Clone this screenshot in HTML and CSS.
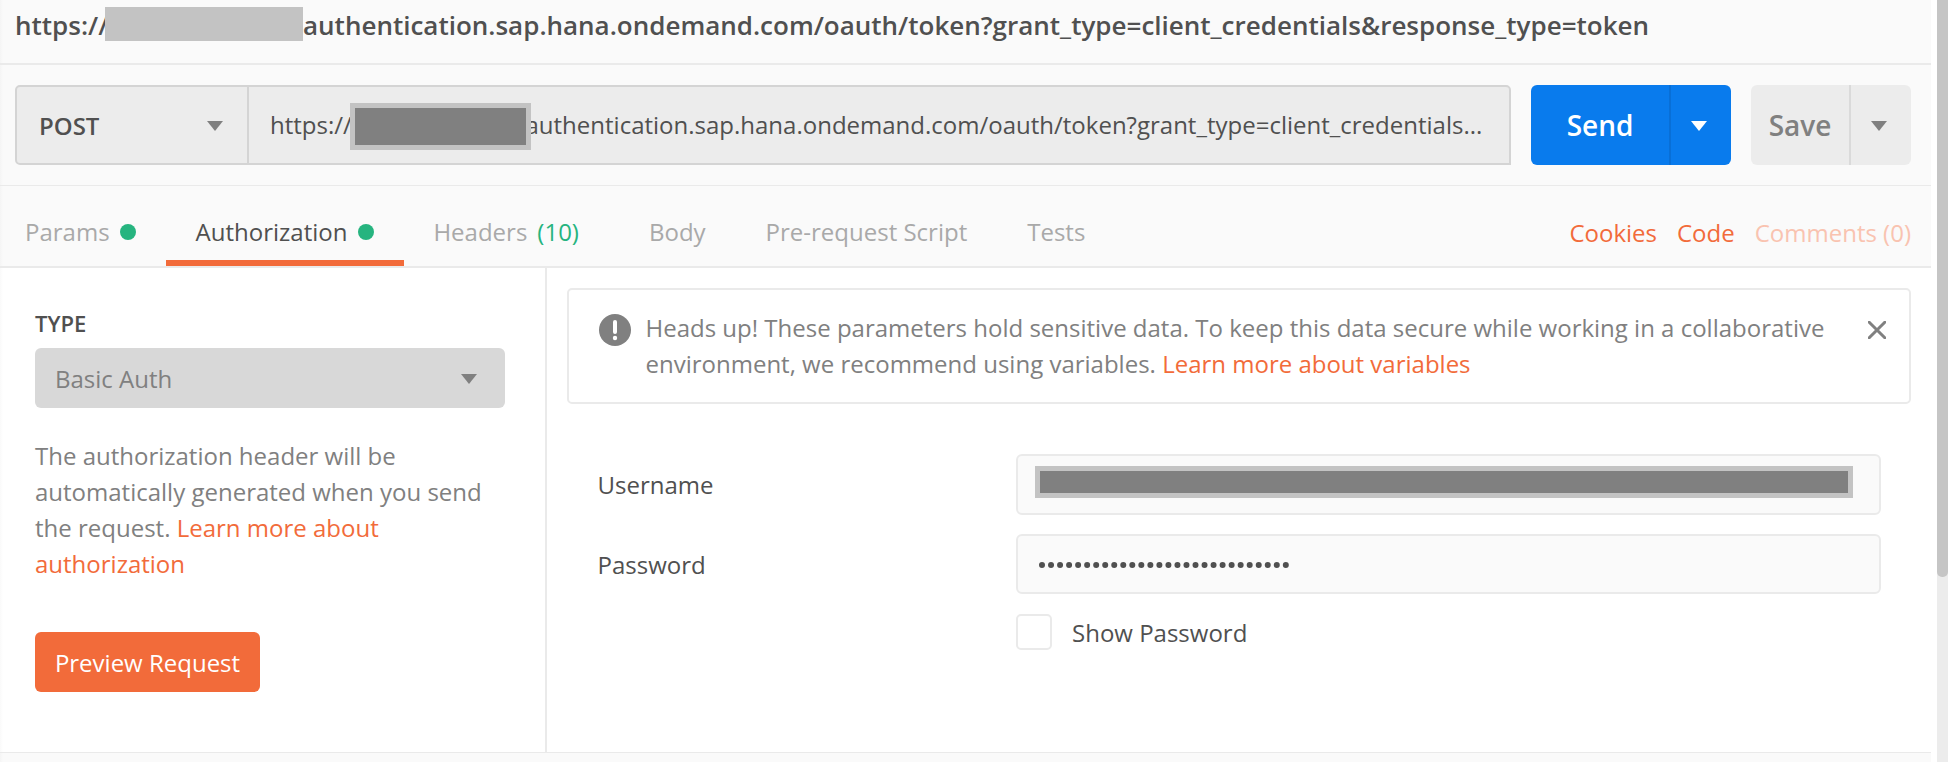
FILE: index.html
```html
<!DOCTYPE html>
<html lang="en">
<head>
<meta charset="utf-8">
<title>Request builder</title>
<link rel="stylesheet" href="styles.css">
</head>
<body>
<div class="window">
  <main class="builder">
    <header class="title"><span>https://</span><span class="mask mask-title"></span><span class="title-rest">authentication.sap.hana.ondemand.com/oauth/token?grant_type=client_credentials&amp;response_type=token</span></header>

    <section class="request">
      <div class="url-group">
        <div class="method"><span>POST</span><svg class="caret" viewBox="0 0 16 10"><path d="M0 0H16L8 10Z"/></svg></div>
        <div class="url"><span>https://</span><span class="mask mask-url"></span><span class="url-rest">authentication.sap.hana.ondemand.com/oauth/token?grant_type=client_credentials...</span></div>
      </div>
      <div class="split send"><button class="split-main">Send</button><button class="split-drop"><svg class="caret" viewBox="0 0 16 10"><path d="M0 0H16L8 10Z"/></svg></button></div>
      <div class="split save"><button class="split-main">Save</button><button class="split-drop"><svg class="caret" viewBox="0 0 16 10"><path d="M0 0H16L8 10Z"/></svg></button></div>
    </section>

    <nav class="tabs">
      <a class="tab">Params<i class="dot"></i></a>
      <a class="tab active">Authorization<i class="dot"></i></a>
      <a class="tab headers">Headers<span class="count">(10)</span></a>
      <a class="tab">Body</a>
      <a class="tab">Pre-request Script</a>
      <a class="tab">Tests</a>
      <div class="links"><a>Cookies</a><a>Code</a><a class="muted">Comments (0)</a></div>
    </nav>

    <section class="content">
      <aside class="auth">
        <div class="auth-label">TYPE</div>
        <div class="select"><span>Basic Auth</span><svg class="caret" viewBox="0 0 16 10"><path d="M0 0H16L8 10Z"/></svg></div>
        <p class="help">The authorization header will be<br>automatically generated when you send<br>the request. <a>Learn more about<br>authorization</a></p>
        <button class="preview">Preview Request</button>
      </aside>
      <div class="panel">
        <div class="notice">
          <svg class="alert" viewBox="0 0 32 32"><circle cx="16" cy="16" r="16" fill="#808080"/><path d="M16 8V18" stroke="#fff" stroke-width="4" stroke-linecap="round"/><circle cx="16" cy="24" r="2.2" fill="#fff"/></svg>
          <p>Heads up! These parameters hold sensitive data. To keep this data secure while working in a collaborative<br>environment, we recommend using variables. <a>Learn more about variables</a></p>
          <svg class="close" viewBox="0 0 18 18"><path d="M1.2 1.2L16.8 16.8M16.8 1.2L1.2 16.8" stroke="#808080" stroke-width="3" stroke-linecap="round"/></svg>
        </div>
        <div class="form">
          <label class="field-label">Username</label>
          <div class="input"><span class="mask mask-user"></span></div>
          <label class="field-label">Password</label>
          <div class="input password"><svg class="bullets" viewBox="0 0 252 6"><path d="M3 3H252" /></svg></div>
          <div class="check"><span class="box"></span><span>Show Password</span></div>
        </div>
      </div>
    </section>
    <footer class="bottom"></footer>
  </main>
  <div class="scrollbar"><div class="thumb"></div></div>
</div>
</body>
</html>
```
FILE: styles.css
```css
* { box-sizing: border-box; }
body {
  margin: 0;
  background: #fff;
  color: #505050;
  font: 24px/36px "Open Sans", "Noto Sans", sans-serif;
}
button { font: inherit; border: 0; padding: 0; color: inherit; background: none; }
p { margin: 0; }
svg { display: block; flex: none; }
.window { display: flex; justify-content: space-between; width: 1948px; height: 762px; overflow: hidden; }
.builder {
  display: flex; flex-direction: column;
  width: 1931px; height: 762px;
  background: linear-gradient(90deg, #f5f5f5, transparent 3px), #fafafa;
}
.caret { width: 16px; height: 10px; fill: #808080; }
.mask { flex: none; background: #c3c3c3; }

.title {
  display: flex; flex: none;
  height: 65px; padding: 7px 0 0 15px;
  border-bottom: 2px solid #eaeaea;
  font-size: 26px; font-weight: 600; line-height: 37px;
  white-space: nowrap;
}
.title > span:first-child { width: 90px; }
.mask-title { width: 198px; height: 34px; }

.request {
  display: flex; flex: none;
  height: 121px; padding: 20px 20px 20px 15px;
  border-bottom: 1px solid #eaeaea;
}
.url-group {
  display: flex;
  width: 1496px; height: 80px;
  border: 2px solid #d4d4d4;
  border-radius: 5px 5px 0 5px;
  background: #ececec;
}
.method {
  display: flex; align-items: center; justify-content: space-between;
  width: 232px; padding: 2px 24px 0 22px;
  border-right: 2px solid #d4d4d4;
  font-weight: 600;
}
.url { display: flex; align-items: center; padding: 2px 0 0 21px; white-space: nowrap; }
.url > span:first-child { width: 80px; padding-bottom: 2px; }
.mask-url { z-index: 1; width: 181px; height: 47px; background: #808080; border: 5px solid #c3c3c3; }
.url-rest { margin-left: -5.5px; padding-bottom: 2px; }
.split { display: flex; height: 80px; border-radius: 6px; overflow: hidden; font-size: 28px; font-weight: 600; }
.split-drop { display: flex; align-items: center; justify-content: center; flex: 1; padding: 2px 4px 0 0; }
.send { width: 200px; margin-left: 20px; background: #097bed; color: #fff; }
.send .split-main { width: 138px; }
.send .split-drop { border-left: 2px solid #086fd7; }
.send .caret { fill: #fff; }
.save { width: 160px; margin-left: 20px; background: #ececec; color: #808080; }
.save .split-main { width: 98px; }
.save .split-drop { border-left: 2px solid #dadada; }

.tabs {
  display: flex; flex: none;
  height: 82px; padding: 0 20px 0 0;
  border-bottom: 2px solid #eaeaea;
  color: #a9a9a9;
}
.tab { display: flex; align-items: center; padding: 18px 30px 0; border-bottom: 6px solid transparent; white-space: nowrap; }
.tab:first-child { padding-left: 25px; }
.tab.active { color: #505050; border-bottom-color: #f26b3a; }
.tab.active .dot { margin-left: 11px; }
.tab.headers { padding: 18px 40px 0 29px; }
.dot { width: 16px; height: 16px; margin-left: 10px; border-radius: 50%; background: #26b47f; }
.count { margin-left: 10px; color: #26b47f; }
.links { display: flex; align-items: center; gap: 20px; margin-left: auto; padding-top: 14px; color: #f26b3a; }
.links .muted { color: #f9c3b0; }

.content { display: flex; flex: none; height: 484px; background: linear-gradient(90deg, #fafafa, transparent 3px), #fff; }
.auth { width: 547px; padding: 37px 40px 0 35px; border-right: 2px solid #eaeaea; }
.auth-label { font-size: 22px; font-weight: 600; }
.select {
  display: flex; align-items: center; justify-content: space-between;
  height: 60px; margin-top: 7px; padding: 2px 28px 0 20px;
  border-radius: 6px; background: #d8d8d8; color: #808080;
}
.help { margin-top: 30px; color: #808080; white-space: nowrap; }
.help a, .notice a { color: #f26b3a; }
.preview { width: 225px; height: 60px; margin-top: 50px; padding-top: 2px; border-radius: 6px; background: #f26b3a; color: #fff; }

.panel { flex: 1; padding: 20px 20px 0; }
.notice {
  display: flex;
  height: 116px; padding: 20px 23px 0 30px;
  border: 2px solid #eaeaea; border-radius: 5px;
  color: #808080; white-space: nowrap;
}
.alert { width: 32px; height: 32px; margin: 4px 14.5px 0 0; }
.close { width: 18px; height: 18px; margin: 11px 0 0 auto; }
.form { display: grid; grid-template-columns: 419px 865px; padding: 50px 0 0 30px; }
.field-label { height: 61px; padding: 13px 0 0 0.5px; }
.input { height: 61px; padding: 10px 17px; border: 2px solid #eaeaea; border-radius: 6px; background: #fafafa; margin-bottom: 19px; }
.input.password { height: 60px; margin-bottom: 20px; }
.mask-user { display: block; width: 818px; height: 32px; background: #808080; border: 5px solid #c3c3c3; }
.bullets { width: 252px; height: 6px; margin: 16px 0 0 4px; overflow: visible; }
.bullets path { stroke: #505050; stroke-width: 6; stroke-linecap: round; stroke-dasharray: 0 9.03; }
.check { grid-column: 2; display: flex; align-items: center; gap: 20px; height: 36px; }
.check > span:last-child { padding-top: 2px; }
.box { width: 36px; height: 36px; border: 2px solid #eaeaea; border-radius: 5px; }

.bottom { flex: 1; border-top: 1px solid #eaeaea; }
.scrollbar { width: 11px; height: 762px; background: #ececec; }
.thumb { height: 577px; border-radius: 0 0 5px 5px; background: #c5c5c5; }
```
